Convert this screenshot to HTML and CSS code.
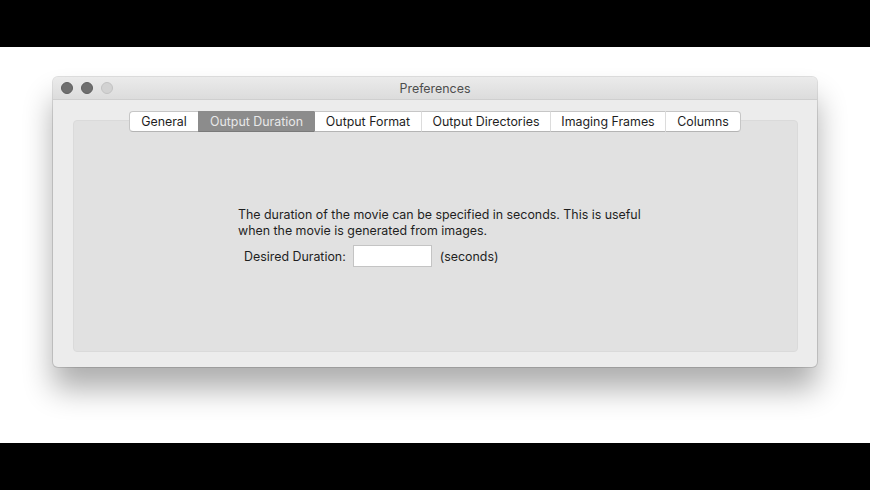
FILE: index.html
```html
<!DOCTYPE html>
<html>
<head>
<meta charset="utf-8">
<link rel="stylesheet" href="styles.css">
</head>
<body>
<div class="bar"></div>
<div class="stage">
  <div class="window">
    <div class="titlebar">
      <div class="lights">
        <span class="light dark"></span>
        <span class="light dark"></span>
        <span class="light off"></span>
      </div>
      <div class="title">Preferences</div>
    </div>
    <div class="body">
      <div class="tabview">
        <div class="tabs">
          <div class="tab t1">General</div>
          <div class="tab t2 selected">Output Duration</div>
          <div class="tab t3">Output Format</div>
          <div class="tab t4">Output Directories</div>
          <div class="tab t5">Imaging Frames</div>
          <div class="tab t6">Columns</div>
        </div>
        <div class="panel">
          <div class="content">
            <p class="desc">The duration of the movie can be specified in seconds. This is useful<br>when the movie is generated from images.</p>
            <div class="row">
              <span class="label">Desired Duration:</span>
              <span class="input"></span>
              <span class="unit">(seconds)</span>
            </div>
          </div>
        </div>
      </div>
    </div>
  </div>
</div>
<div class="bar"></div>
</body>
</html>
```
FILE: styles.css
```css
html, body {
  margin: 0;
  padding: 0;
  background: #000;
  font-family: "Inter", "Liberation Sans", sans-serif;
  font-size: 12.4px;
  color: #1e1e1e;
}
.bar {
  height: 47px;
  background: #000;
}
.stage {
  height: 396px;
  background: #fff;
  padding-top: 30px;
  padding-left: 53px;
  box-sizing: border-box;
  overflow: hidden;
}
.window {
  width: 764px;
  height: 290px;
  background: #ececec;
  border-radius: 5px;
  box-shadow: 0 0 0 1px rgba(0,0,0,0.12), 0 22px 30px rgba(0,0,0,0.32);
  display: flex;
  flex-direction: column;
  overflow: hidden;
}
.titlebar {
  height: 22px;
  background: linear-gradient(#ebebeb, #dcdcdc);
  border-bottom: 1px solid #cfcfcf;
  display: flex;
  align-items: center;
  position: relative;
  flex: none;
}
.lights {
  display: flex;
  gap: 8px;
  padding-left: 8px;
}
.light {
  width: 12px;
  height: 12px;
  border-radius: 50%;
  box-sizing: border-box;
}
.light.dark {
  background: #6f6f6f;
  border: 1px solid #5f5f5f;
}
.light.off {
  background: #d2d2d2;
  border: 1px solid #c2c2c2;
}
.title {
  position: absolute;
  left: 0;
  right: 0;
  text-align: center;
  color: #4d4d4d;
  font-size: 12.4px;
}
.body {
  flex: 1;
  padding: 11px 19px 15px 20px;
}
.tabview {
  position: relative;
  height: 100%;
  display: flex;
  flex-direction: column;
}
.tabs {
  position: absolute;
  top: 0;
  left: 0;
  right: 0;
  display: flex;
  justify-content: flex-start;
  padding-left: 56px;
  z-index: 2;
}
.tab {
  height: 19px;
  line-height: 19px;
  background: #fff;
  border-top: 1px solid #c6c6c6;
  border-bottom: 1px solid #b4b4b4;
  border-left: 1px solid #dcdcdc;
  text-align: center;
  color: #1e1e1e;
  box-sizing: content-box;
}
.tab.t1 { width: 68px; border-left: 1px solid #c6c6c6; border-radius: 4px 0 0 4px; }
.tab.t2 { width: 115px; }
.tab.t3 { width: 106px; }
.tab.t4 { width: 128px; }
.tab.t5 { width: 114px; }
.tab.t6 { width: 74px; border-right: 1px solid #c6c6c6; border-radius: 0 4px 4px 0; }
.tab.selected {
  background: #8c8c8c;
  color: #e8e8e8;
  border-top-color: #8c8c8c;
  border-bottom-color: #7a7a7a;
  border-left-color: #8c8c8c;
}
.tab.t3 { border-left-color: #8c8c8c; }
.panel {
  margin-top: 9px;
  flex: 1;
  background: #e1e1e1;
  border: 1px solid #dadada;
  border-radius: 4px;
  display: flex;
}
.content {
  padding: 86px 0 0 164px;
}
.desc {
  margin: 0;
  line-height: 16px;
}
.row {
  display: flex;
  align-items: center;
  margin-top: 6px;
  padding-left: 6px;
}
.input {
  width: 77px;
  height: 20px;
  background: #fff;
  border: 1px solid #c4c4c4;
  margin: 0 8px 0 7px;
}
```
